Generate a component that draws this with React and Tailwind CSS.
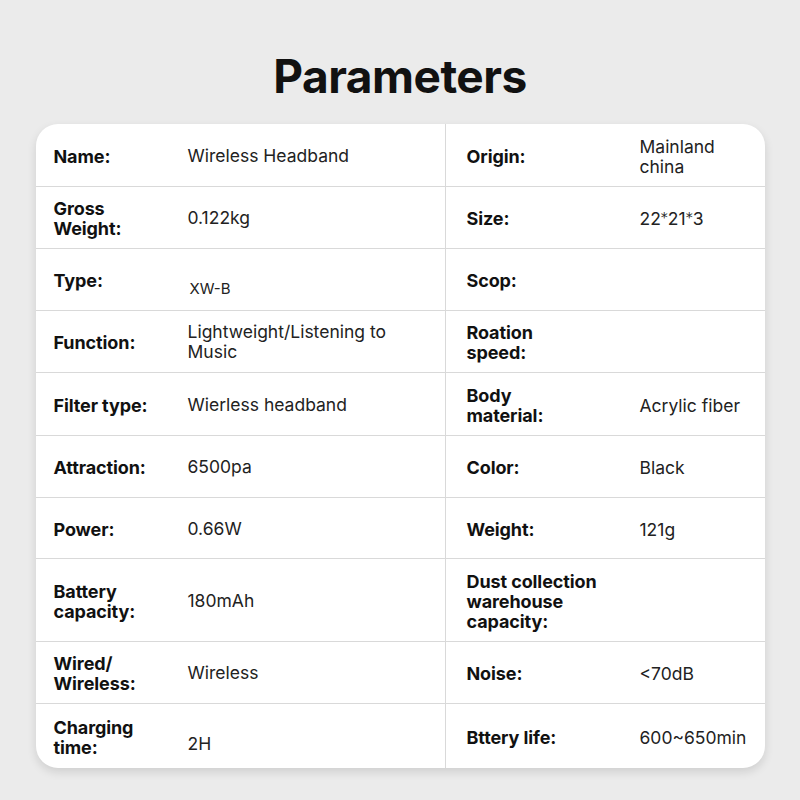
import React from "react";

const Star = () => (
  <span style={{ fontFamily: "'DejaVu Sans', sans-serif" }} className="relative top-[-3px] text-[14px]">*</span>
);

const rows = [
  { h: 63, l: ["Name:", "Wireless Headband"], r: ["Origin:", "Mainland\nchina"] },
  { h: 62, l: ["Gross\nWeight:", "0.122kg"], r: ["Size:", <>22<Star />21<Star />3</>] },
  { h: 62, l: ["Type:", "XW-B"], r: ["Scop:", ""], lv: "type" },
  { h: 62, l: ["Function:", "Lightweight/Listening to\nMusic"], r: ["Roation\nspeed:", ""] },
  { h: 63, l: ["Filter type:", "Wierless headband"], r: ["Body\nmaterial:", "Acrylic fiber"] },
  { h: 62, l: ["Attraction:", "6500pa"], r: ["Color:", "Black"] },
  { h: 61, l: ["Power:", "0.66W"], r: ["Weight:", "121g"] },
  { h: 83, l: ["Battery\ncapacity:", "180mAh"], r: ["Dust collection\nwarehouse\ncapacity:", ""] },
  { h: 62, l: ["Wired/\nWireless:", "Wireless"], r: ["Noise:", "<70dB"] },
  { h: 64, l: ["Charging\ntime:", "2H"], r: ["Bttery life:", "600~650min"], lv: "low" },
];

export default function App() {
  return (
    <div
      className="w-[800px] h-[800px] bg-[#ebebeb] flex flex-col items-center"
      style={{ fontFamily: "Inter, 'Noto Sans', sans-serif" }}
    >
      <h1 className="mt-[48px] h-[76px] text-[46px] leading-[56px] font-bold text-[#111] tracking-[-0.5px]">
        Parameters
      </h1>
      <div className="w-[729px] bg-white rounded-[22px] overflow-hidden shadow-[0_4px_10px_rgba(0,0,0,0.12)] flex flex-col">
        {rows.map((row, i) => (
          <div
            key={i}
            className={`flex ${i < rows.length - 1 ? "border-b border-[#d9d9d9]" : ""}`}
            style={{ height: row.h }}
          >
            <div className="w-[410px] shrink-0 border-r border-[#d9d9d9] flex items-center pl-[18px] pt-[3px]">
              <div className="w-[134px] shrink-0 whitespace-pre-line text-[18px] leading-[20px] font-bold text-[#111] tracking-[-0.1px]">
                {row.l[0]}
              </div>
              <div
                className={`flex-1 whitespace-pre-line text-[#222] ${
                  row.lv === "type"
                    ? "text-[15px] leading-[20px] pt-[16px] pl-[2px]"
                    : row.lv === "low"
                    ? "text-[17.5px] leading-[20px] pt-[13px]"
                    : "text-[17.5px] leading-[20px] pb-[2px]"
                }`}
              >
                {row.l[1]}
              </div>
            </div>
            <div className="flex-1 flex items-center pl-[21px] pt-[3px]">
              <div className="w-[173px] shrink-0 whitespace-pre-line text-[18px] leading-[20px] font-bold text-[#111] tracking-[-0.1px]">
                {row.r[0]}
              </div>
              <div className="flex-1 whitespace-pre-line text-[17.5px] leading-[20px] text-[#222]">
                {row.r[1]}
              </div>
            </div>
          </div>
        ))}
      </div>
    </div>
  );
}
